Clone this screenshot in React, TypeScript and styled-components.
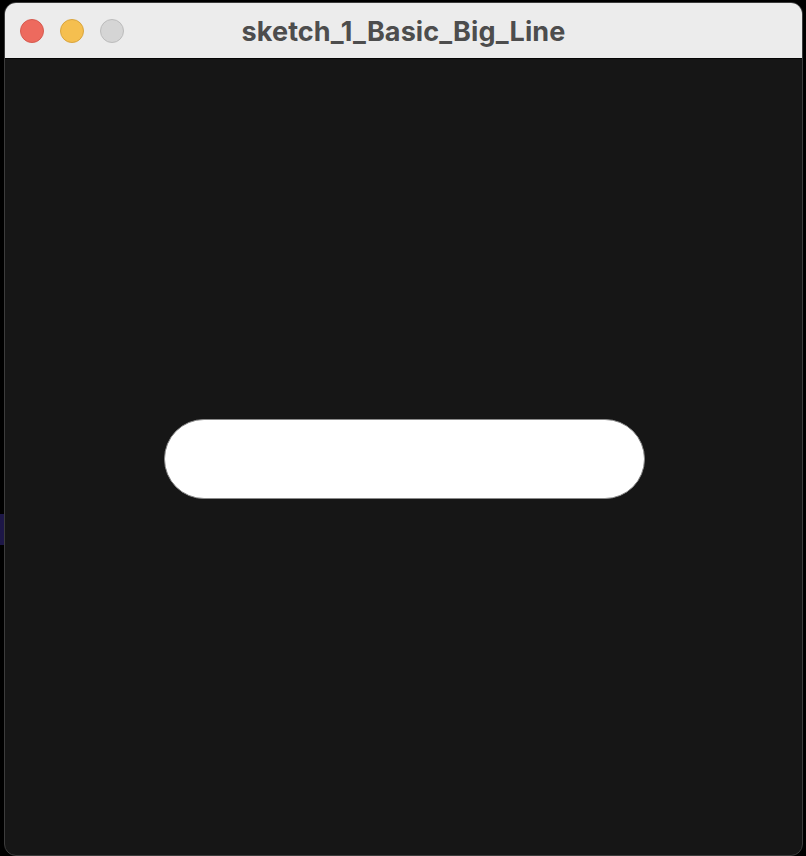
import React from "react";
import styled, { createGlobalStyle } from "styled-components";

const Global = createGlobalStyle`
  html, body { margin: 0; padding: 0; background: #000; }
  body { width: 806px; height: 856px; overflow: hidden; }
`;

const Desktop = styled.div`
  width: 806px;
  height: 856px;
  box-sizing: border-box;
  padding: 2px 3px 0 4px;
  background: linear-gradient(#1d1747, #1d1747) 0 514px / 5px 31px no-repeat, #000;
`;

const Window = styled.div`
  width: 799px;
  height: 854px;
  box-sizing: border-box;
  border: 1px solid #3c3c3c;
  border-radius: 12px;
  overflow: hidden;
  display: flex;
  flex-direction: column;
  background: #161616;
`;

const TitleBar = styled.div`
  height: 55px;
  flex: none;
  background: #ececec;
  border-bottom: 1px solid #050505;
  display: grid;
  grid-template-columns: 1fr auto 1fr;
  align-items: center;
`;

const Lights = styled.div`
  display: flex;
  gap: 16px;
  padding-left: 15px;
`;

const Light = styled.span<{ $fill: string; $edge: string }>`
  width: 24px;
  height: 24px;
  box-sizing: border-box;
  border-radius: 50%;
  background: ${(p) => p.$fill};
  border: 1px solid ${(p) => p.$edge};
`;

const Title = styled.div`
  font-family: Inter, "Liberation Sans", sans-serif;
  font-weight: 700;
  font-size: 27px;
  color: #4d4d4d;
  letter-spacing: 0.1px;
  padding-top: 1px;
`;

const Canvas = styled.div`
  flex: 1;
  display: flex;
  justify-content: center;
  padding-top: 360px;
  padding-left: 1px;
`;

const Pill = styled.div`
  width: 481px;
  height: 80px;
  box-sizing: border-box;
  background: #fff;
  border: 1px solid #8a8a8a;
  border-radius: 40px;
`;

export default function App() {
  return (
    <>
      <Global />
      <Desktop>
        <Window>
          <TitleBar>
            <Lights>
              <Light $fill="#ed6a5e" $edge="#d65a4f" />
              <Light $fill="#f5bf4f" $edge="#d9a53e" />
              <Light $fill="#d5d5d5" $edge="#bcbcbc" />
            </Lights>
            <Title>sketch_1_Basic_Big_Line</Title>
            <div />
          </TitleBar>
          <Canvas>
            <Pill />
          </Canvas>
        </Window>
      </Desktop>
    </>
  );
}
